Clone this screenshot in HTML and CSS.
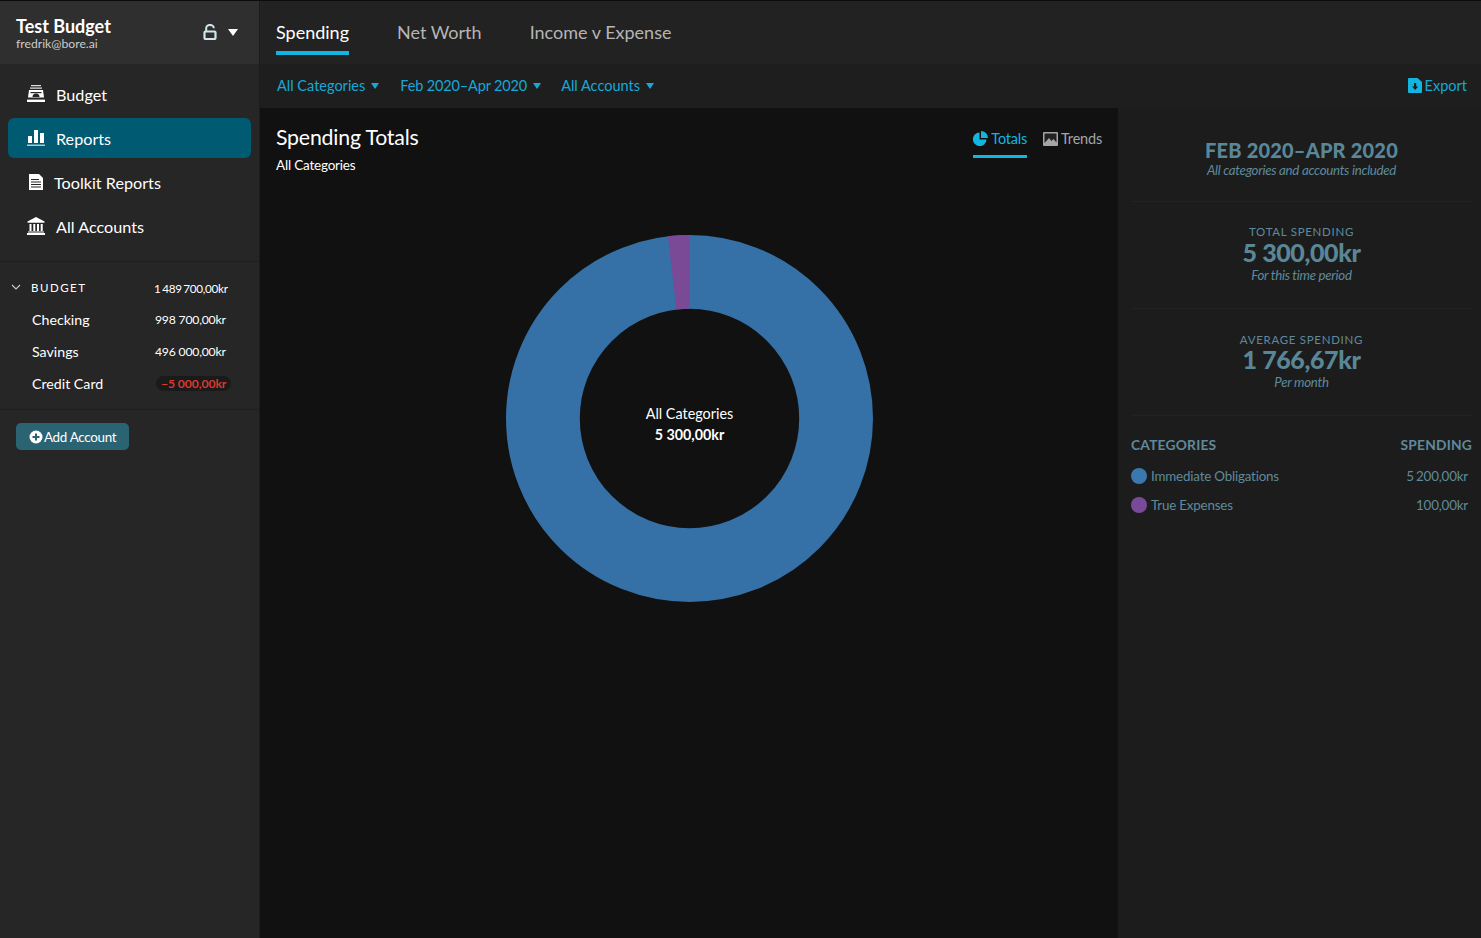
FILE: index.html
```html
<!DOCTYPE html>
<html lang="en">
<head>
<meta charset="utf-8">
<title>Reports</title>
<link rel="stylesheet" href="styles.css">
</head>
<body>
<div class="app">
  <aside class="sidebar">
    <header class="budget-head">
      <div class="budget-id">
        <div class="budget-name">Test Budget</div>
        <div class="budget-mail">fredrik@bore.ai</div>
      </div>
      <svg class="lock" viewBox="0 0 14 16" width="14" height="16"><path d="M3.200 8V4.200a3.800 3.300 0 0 1 7.600 0" fill="none" stroke="#cfe6ea" stroke-width="2"/><rect x="1.500" y="7.500" width="11" height="7.500" rx="1" fill="none" stroke="#cfe6ea" stroke-width="2.200"/></svg>
      <span class="caret-white"></span>
    </header>
    <nav class="nav">
      <a class="nav-item">
        <svg class="nav-icon" viewBox="0 0 20 18" width="20" height="18"><path d="M5 0h10v1.200H5zM4 2.600h12v1.200H4z" fill="#ddd"/><path d="M3 5h14l1 7.500H2z" fill="#fff"/><path d="M6.500 12a3.500 3.500 0 0 1 7 0z" fill="#262626"/><rect x="1" y="14.600" width="18" height="2.400" fill="#fff"/><rect x="4.500" y="7" width="11" height="1.200" fill="#262626"/></svg>
        <span>Budget</span>
      </a>
      <a class="nav-item active">
        <svg class="nav-icon" viewBox="0 0 20 18" width="20" height="18"><path d="M2 7h4v7H2zM8 1h4v13H8zM14 4h4v10h-4z" fill="#fff"/><rect x="1" y="15.500" width="18" height="1.500" fill="#a9c9d3"/></svg>
        <span>Reports</span>
      </a>
      <a class="nav-item toolkit">
        <svg class="nav-icon small" viewBox="0 0 16 18" width="16" height="18"><path d="M1 1h10l4 4v12H1z" fill="#fff"/><path d="M3 6h8v1H3zM3 8.500h10v1H3zM3 11h10v1H3zM3 13.500h10v1H3z" fill="#262626"/></svg>
        <span>Toolkit Reports</span>
      </a>
      <a class="nav-item">
        <svg class="nav-icon" viewBox="0 0 20 18" width="20" height="18"><path d="M10 0l8.500 4.500v1.300H1.500V4.500z" fill="#fff"/><path d="M3.500 7h2v7h-2zM7.300 7h2v7h-2zM11 7h2v7h-2zM14.700 7h2v7h-2z" fill="#fff"/><rect x="2" y="14.500" width="16" height="1" fill="#fff"/><rect x="1" y="16" width="18" height="2" fill="#fff"/></svg>
        <span>All Accounts</span>
      </a>
    </nav>
    <section class="accounts">
      <div class="acct-row acct-group">
        <svg class="chev" viewBox="0 0 10 6" width="10" height="6"><path d="M1 1l4 4 4-4" fill="none" stroke="#ccc" stroke-width="1.100"/></svg>
        <span class="group-name">BUDGET</span>
        <span class="amount group-amount">1 489 700,00kr</span>
      </div>
      <div class="acct-row"><span class="acct-name">Checking</span><span class="amount">998 700,00kr</span></div>
      <div class="acct-row"><span class="acct-name">Savings</span><span class="amount">496 000,00kr</span></div>
      <div class="acct-row"><span class="acct-name">Credit Card</span><span class="amount negative">−5 000,00kr</span></div>
    </section>
    <div class="add-wrap">
      <button class="add-btn">
        <svg viewBox="0 0 14 14" width="14" height="14"><circle cx="7" cy="7" r="6.500" fill="#fff"/><path d="M6 3.500h2V6h2.500v2H8v2.500H6V8H3.500V6H6z" fill="#2a6472"/></svg>
        <span>Add Account</span>
      </button>
    </div>
  </aside>
  <div class="content">
    <nav class="tabs">
      <a class="tab current">Spending</a>
      <a class="tab">Net Worth</a>
      <a class="tab">Income v Expense</a>
    </nav>
    <div class="filters">
      <a class="filter">All Categories<i class="caret-blue"></i></a>
      <a class="filter filter-date">Feb 2020–Apr 2020<i class="caret-blue"></i></a>
      <a class="filter">All Accounts<i class="caret-blue"></i></a>
      <a class="export">
        <svg viewBox="0 0 14 15" width="14" height="15"><path d="M1 0h8.500L14 4v10a1 1 0 0 1-1 1H1a1 1 0 0 1-1-1V1a1 1 0 0 1 1-1z" fill="#12b5e0"/><path d="M6 5h2.200v3.500h2L7.100 12 4 8.500h2z" fill="#1e1e1e"/></svg>
        <span>Export</span>
      </a>
    </div>
    <div class="body">
      <main class="report">
        <div class="report-head">
          <div>
            <h1 class="report-title">Spending Totals</h1>
            <div class="report-sub">All Categories</div>
          </div>
          <div class="view-tabs">
            <a class="view-tab on">
              <svg viewBox="0 0 15 15" width="15" height="15"><path d="M6.500 1.500v7h7A6.800 6.800 0 1 1 6.500 1.500z" fill="#12b5e0"/><path d="M8 0a7 7 0 0 1 7 7H8z" fill="#12b5e0"/></svg>
              <span>Totals</span>
            </a>
            <a class="view-tab">
              <svg viewBox="0 0 15 14" width="15" height="14"><rect width="15" height="14" rx="1" fill="#a5a5a5"/><path d="M1.500 1.500h12v9l-3-3.500-2 2-2.500-3-4.500 5z" fill="#222"/></svg>
              <span>Trends</span>
            </a>
          </div>
        </div>
        <div class="chart">
          <div class="donut">
            <svg viewBox="0 0 368 368" width="367" height="367">
              <circle cx="184" cy="184" r="147" fill="none" stroke="#3571a6" stroke-width="74"/>
              <path d="M184 0A184 184 0 0 0 162.250 1.290L171 74.770A110 110 0 0 1 184 74z" fill="#7a4a96"/>
            </svg>
            <div class="donut-label">
              <div>All Categories</div>
              <strong>5 300,00kr</strong>
            </div>
          </div>
        </div>
      </main>
      <aside class="summary">
        <section class="stat stat-first">
          <div class="range">FEB 2020–APR 2020</div>
          <div class="note">All categories and accounts included</div>
        </section>
        <section class="stat">
          <div class="stat-label">TOTAL SPENDING</div>
          <div class="stat-value">5 300,00kr</div>
          <div class="note">For this time period</div>
        </section>
        <section class="stat stat-avg">
          <div class="stat-label">AVERAGE SPENDING</div>
          <div class="stat-value">1 766,67kr</div>
          <div class="note">Per month</div>
        </section>
        <section class="cats">
          <div class="cat-head"><span>CATEGORIES</span><span>SPENDING</span></div>
          <div class="cat-row"><i class="dot dot-blue"></i><span class="cat-name">Immediate Obligations</span><span class="cat-val">5 200,00kr</span></div>
          <div class="cat-row"><i class="dot dot-purple"></i><span class="cat-name">True Expenses</span><span class="cat-val">100,00kr</span></div>
        </section>
      </aside>
    </div>
  </div>
</div>
</body>
</html>
```
FILE: styles.css
```css
* { box-sizing: border-box; }
html, body { margin: 0; height: 100%; }
body { font-family: Lato, "Open Sans", sans-serif; color: #fff; background: #111; overflow: hidden; }
.app { display: flex; height: 938px; border-top: 1px solid #0c0c0c; }

.sidebar { width: 260px; flex: none; background: #262626; border-right: 1px solid #1c1c1c; }
.budget-head { height: 63px; background: #2f2f2f; display: flex; align-items: center; padding: 0 21px 0 16px; }
.budget-id { flex: 1; }
.budget-name { font-size: 18px; font-weight: 700; line-height: 22px; }
.budget-mail { font-size: 12.200px; line-height: 14px; color: #ccc; }
.lock { margin-right: 12px; margin-top: -2px; transform: translateX(1px); }
.caret-white { width: 0; height: 0; border-left: 5.500px solid transparent; border-right: 5.500px solid transparent; border-top: 7px solid #fff; margin-top: -1px; }

.nav { padding: 10px 8px 0; height: 198px; border-bottom: 1px solid #1f1f1f; }
.nav-item { display: flex; align-items: center; gap: 10px; height: 40px; margin-bottom: 4px; padding-left: 18px; border-radius: 6px; font-size: 16.200px; color: #fff; }
.nav-item.toolkit { padding-left: 20px; }
.nav-item.active { background: #005a72; }

.accounts { padding: 9px 0 10px; border-bottom: 1px solid #1f1f1f; }
.acct-row { display: flex; align-items: center; height: 32px; padding-left: 32px; font-size: 14.200px; }
.acct-name { width: 123px; }
.amount { font-size: 12.200px; letter-spacing: -0.2px; padding-top: 1px; }
.acct-group { padding-left: 11px; }
.chev { margin-right: 10px; }
.group-name { width: 123px; font-size: 11.500px; letter-spacing: 1.500px; }
.group-amount { font-size: 11.700px; letter-spacing: -0.3px; word-spacing: -1px; }
.negative { color: #d9382e; font-weight: 700; background: #1a1a1a; border-radius: 9px; padding: 0 5px; margin-left: 1px; letter-spacing: -0.1px; }

.add-wrap { padding: 13px 16px; }
.add-btn { display: inline-flex; align-items: center; height: 27px; padding: 0 13px; background: #2a6472; color: #fff; border: 0; border-radius: 5px; font: 13.400px Lato, sans-serif; letter-spacing: -0.3px; }
.add-btn svg { margin-right: 1px; }

.content { flex: 1; display: flex; flex-direction: column; min-width: 0; }
.tabs { height: 63px; flex: none; display: flex; gap: 48px; padding-left: 16px; background: #222; }
.tab { display: flex; align-items: center; height: 54px; padding-top: 8px; font-size: 18px; color: #b5b5b5; }
.tab.current { color: #fff; border-bottom: 4px solid #12b5e0; padding-top: 12px; }

.filters { height: 44px; flex: none; display: flex; align-items: center; gap: 20px; padding: 0 14px 2px 17px; background: #1e1e1e; font-size: 14.500px; color: #17a8d8; }
.filter-date { letter-spacing: -0.15px; margin-left: 1px; }
.caret-blue { display: inline-block; margin-left: 6px; vertical-align: 2px; width: 0; height: 0; border-left: 4.500px solid transparent; border-right: 4.500px solid transparent; border-top: 6px solid #17a8d8; }
.export { margin-left: auto; display: flex; align-items: center; gap: 3px; }

.body { flex: 1; display: flex; min-height: 0; }
.report { width: 858px; flex: none; background: #111; padding: 0 16px; }
.report-head { display: flex; justify-content: space-between; height: 127px; padding-top: 15px; }
.report-title { margin: 0; font-size: 21.300px; font-weight: 400; line-height: 28px; letter-spacing: -0.2px; }
.report-sub { font-size: 13.500px; line-height: 16px; margin-top: 6px; letter-spacing: -0.2px; }
.view-tabs { display: flex; gap: 16px; align-items: flex-start; margin-top: 1px; }
.view-tab { display: flex; align-items: center; gap: 3px; height: 34px; padding-bottom: 2px; border-bottom: 3px solid transparent; font-size: 14.500px; color: #a5a5a5; letter-spacing: -0.2px; }
.view-tab.on { color: #12b5e0; border-bottom-color: #12b5e0; }
.chart { display: flex; padding-left: 230px; }
.donut { position: relative; width: 367px; height: 367px; }
.donut svg { display: block; }
.donut-label { position: absolute; inset: 0; padding-top: 10px; display: flex; flex-direction: column; align-items: center; justify-content: center; font-size: 14.400px; line-height: 21px; }
.donut-label strong { font-weight: 700; font-size: 14.300px; }

.summary { flex: 1; background: #1c1c1c; padding: 0 9px 0 13px; text-align: center; color: #5f8a9c; }
.stat { height: 107px; padding-top: 23px; border-bottom: 1px solid #222; }
.stat-first { height: 94px; padding-top: 28px; }
.stat-avg .stat-label { position: relative; top: 1px; }
.range { font-size: 20px; font-weight: 900; line-height: 26px; letter-spacing: 0.2px; color: #5a8798; padding-top: 1px; margin-bottom: -1px; }
.stat-label { font-size: 11.500px; letter-spacing: 0.7px; line-height: 14px; }
.stat-value { font-size: 25px; font-weight: 900; line-height: 29px; letter-spacing: -0.4px; color: #5a8798; margin-top: -1px; }
.note { font-size: 13.300px; font-style: italic; line-height: 17px; letter-spacing: -0.3px; }
.cats { padding-top: 19px; text-align: left; }
.cat-head { display: flex; justify-content: space-between; font-size: 13.800px; font-weight: 700; letter-spacing: 0.2px; line-height: 20px; margin-bottom: 6px; }
.cat-row { display: flex; align-items: center; height: 29px; font-size: 13.400px; letter-spacing: -0.2px; padding-right: 4px; }
.dot { width: 16px; height: 16px; border-radius: 50%; margin-right: 4px; }
.dot-blue { background: #3b78b0; }
.dot-purple { background: #7a4a9a; }
.cat-name { flex: 1; }
.cat-val { word-spacing: -1px; }
```
